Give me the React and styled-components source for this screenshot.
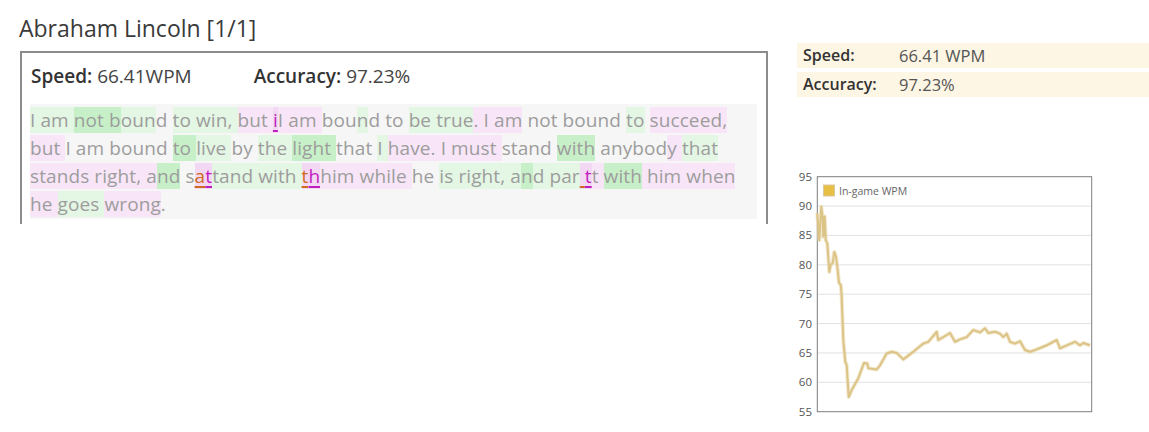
import React from 'react'
import styled, { createGlobalStyle } from 'styled-components'

const Global = createGlobalStyle`
  body {
    margin: 0;
    background: #ffffff;
    font-family: "Open Sans", "Noto Sans", sans-serif;
  }
`

const Page = styled.div`
  width: 1149px;
  height: 432px;
  display: flex;
  align-items: flex-start;
  overflow: hidden;
`

const Left = styled.div`
  width: 749px;
  padding: 13px 0 0 19px;
  margin-right: 29px;
`

const Title = styled.h1`
  margin: 0 0 8px 0;
  font-size: 23px;
  line-height: 30px;
  font-weight: 400;
  color: #3a3a3a;
`

const Box = styled.div`
  margin-left: 1px;
  height: 173px;
  border: 2px solid #8c8c8c;
  border-bottom: none;
  padding: 11px 8px 0 8px;
  box-sizing: border-box;
`

const StatsLine = styled.div`
  display: flex;
  gap: 62px;
  font-size: 19px;
  line-height: 24px;
  color: #444;
  padding-left: 1px;
`

const Stat = styled.span`
  b {
    font-weight: 600;
    color: #333;
  }
`

const Passage = styled.div`
  margin-top: 16px;
  width: 727px;
  background: #f6f6f6;
  padding: 2px 0 1px 0;
  font-size: 19px;
  letter-spacing: 0.1px;
  color: #9d9d9d;
`

const Line = styled.div`
  height: 28px;
  line-height: 28px;
  white-space: pre;
`

const bg = {
  G: '#c8f0c8',
  g: '#e4f6e4',
  p: '#f8e6f8',
  n: 'transparent',
  e: '#f3d8f3',
  o: '#f3d8f3',
}

const Seg = styled.span`
  display: inline-block;
  height: 26px;
  line-height: 27px;
  vertical-align: top;
  margin-top: 1px;
  background: ${p => bg[p.$t]};
  ${p => p.$t === 'e' && `color: #c01fc0; text-decoration: underline; text-decoration-thickness: 2px; text-underline-offset: 3px;`}
  ${p => p.$t === 'o' && `color: #d06c22; text-decoration: underline; text-decoration-thickness: 2px; text-underline-offset: 3px;`}
`

const lines = [
  [['I am ', 'g'], ['not b', 'G'], ['oun', 'g'], ['d ', 'n'], ['to win, ', 'g'], ['but ', 'p'], ['i', 'e'], ['I am ', 'p'], ['bou', 'n'], ['n', 'g'], ['d to ', 'n'], ['be true', 'g'], ['. I am', 'p'], [' not bound ', 'n'], ['to', 'g'], [' ', 'n'], ['succeed,', 'p']],
  [['but ', 'p'], ['I am bound ', 'n'], ['to ', 'G'], ['live ', 'g'], ['by ', 'n'], ['the ', 'g'], ['light ', 'G'], ['that ', 'n'], ['I ', 'g'], ['have. ', 'p'], ['I must ', 'p'], ['stand ', 'n'], ['with', 'G'], [' anybod', 'n'], ['y ', 'p'], ['that', 'g']],
  [['stands ', 'p'], ['right, ', 'p'], ['a', 'p'], ['nd', 'G'], [' s', 'n'], ['a', 'o'], ['t', 'e'], ['tand ', 'g'], ['with ', 'g'], ['t', 'o'], ['h', 'e'], ['him while ', 'p'], ['he ', 'n'], ['is ', 'g'], ['right, ', 'g'], ['a', 'g'], ['n', 'G'], ['d ', 'g'], ['par', 'g'], [' ', 'o'], ['t', 'e'], ['t ', 'p'], ['with', 'G'], [' him when', 'p']],
  [['he ', 'p'], ['goes ', 'g'], ['wrong', 'p'], ['.', 'n']],
]

const Right = styled.div`
  flex: 1;
  padding-top: 43px;
`

const Row = styled.div`
  display: grid;
  grid-template-columns: 96px 1fr;
  height: 25px;
  line-height: 25px;
  margin-bottom: 4px;
  padding-left: 6px;
  background: #fdf6e4;
  font-size: 16px;
  color: #555;
`

const Label = styled.span`
  font-weight: 600;
  color: #333;
`

const Value = styled.span`
  font-size: 16.5px;
`

const Chart = styled.svg`
  display: block;
  margin-top: 68px;
  overflow: visible;
`

// raw points read off the chart: [x px, wpm]
const pts = [
  [817.3, 88.8], [819.3, 84.2], [821.3, 89.9], [822.7, 87.9], [823.3, 84.8], [824.7, 88.2], [825.7, 84.2],
  [827.3, 83.7], [829.3, 78.8], [830.7, 80], [832.7, 80.3], [834.3, 82.2], [836, 81.4], [837.3, 79.7],
  [839, 76.9], [840.7, 76.6], [841.5, 75.2], [843.3, 67.2], [845.3, 63.5], [846.7, 62.9], [848.7, 57.5],
  [851.7, 58.7], [858.3, 60.7], [864, 63.3], [867.3, 63.2], [868.3, 62.4], [876.7, 62.2], [880, 62.9],
  [886.7, 64.9], [891.7, 65.2], [896.7, 65], [903.3, 63.9], [913.3, 65.2], [923.3, 66.6], [928.3, 66.9],
  [936.7, 68.6], [938.3, 67.2], [943.3, 67.7], [950, 68.4], [955, 66.9], [960, 67.3], [966.7, 67.7],
  [973.3, 68.9], [980, 68.5], [985, 69.2], [988.3, 68.4], [995, 68.6], [1000, 68.3], [1003.3, 67.7],
  [1006.7, 68.3], [1010, 66.9], [1015, 66.6], [1020, 67], [1025, 65.5], [1030, 65.2], [1036.7, 65.6],
  [1046.7, 66.3], [1056.7, 67.2], [1060, 65.8], [1066.7, 66.3], [1075, 66.9], [1080, 66.3], [1083.3, 66.7],
  [1090, 66.3],
]

const OX = 797
const OY = 165
const top = 176.7 - OY
const bottom = 411.7 - OY
const step = (bottom - top) / 40
const yOf = v => bottom - (v - 55) * step

const WpmChart = () => {
  const ticks = [95, 90, 85, 80, 75, 70, 65, 60, 55]
  const line = pts.map(([x, v]) => `${(x - OX).toFixed(1)},${yOf(v).toFixed(1)}`).join(' ')
  return (
    <Chart width="300" height="260" viewBox="0 0 300 260">
      {ticks.map(t => (
        <g key={t}>
          {t !== 95 && t !== 55 && (
            <line x1="20.3" x2="294.7" y1={yOf(t)} y2={yOf(t)} stroke="#e2e2e2" strokeWidth="1" />
          )}
          <text x="15" y={yOf(t) + 4} textAnchor="end" fontSize="11.5" fill="#555" fontFamily="Open Sans, sans-serif">{t}</text>
        </g>
      ))}
      <rect x="20.3" y={top} width="274.4" height={bottom - top} fill="none" stroke="#7d7d7d" strokeWidth="1" />
      <polyline points={line} fill="none" stroke="#ead9ad" strokeWidth="4" strokeLinejoin="round" opacity="0.6" />
      <polyline points={line} fill="none" stroke="#dcc386" strokeWidth="2" strokeLinejoin="round" />
      <rect x="26.5" y="20" width="11" height="11" fill="#e8bf45" stroke="#d9c9a0" strokeWidth="1" />
      <text x="42" y="29.5" fontSize="10.5" fill="#666" fontFamily="Open Sans, sans-serif">In-game WPM</text>
    </Chart>
  )
}

const App = () => {
  return (
    <Page>
      <Global />
      <Left>
        <Title>Abraham Lincoln [1/1]</Title>
        <Box>
          <StatsLine>
            <Stat><b>Speed:</b> 66.41WPM</Stat>
            <Stat><b>Accuracy:</b> 97.23%</Stat>
          </StatsLine>
          <Passage>
            {lines.map((segs, i) => (
              <Line key={i}>
                {segs.map(([txt, t], j) => (
                  <Seg key={j} $t={t}>{txt}</Seg>
                ))}
              </Line>
            ))}
          </Passage>
        </Box>
      </Left>
      <Right>
        <Row><Label>Speed:</Label><Value>66.41 WPM</Value></Row>
        <Row><Label>Accuracy:</Label><Value>97.23%</Value></Row>
        <WpmChart />
      </Right>
    </Page>
  )
}

export default App
